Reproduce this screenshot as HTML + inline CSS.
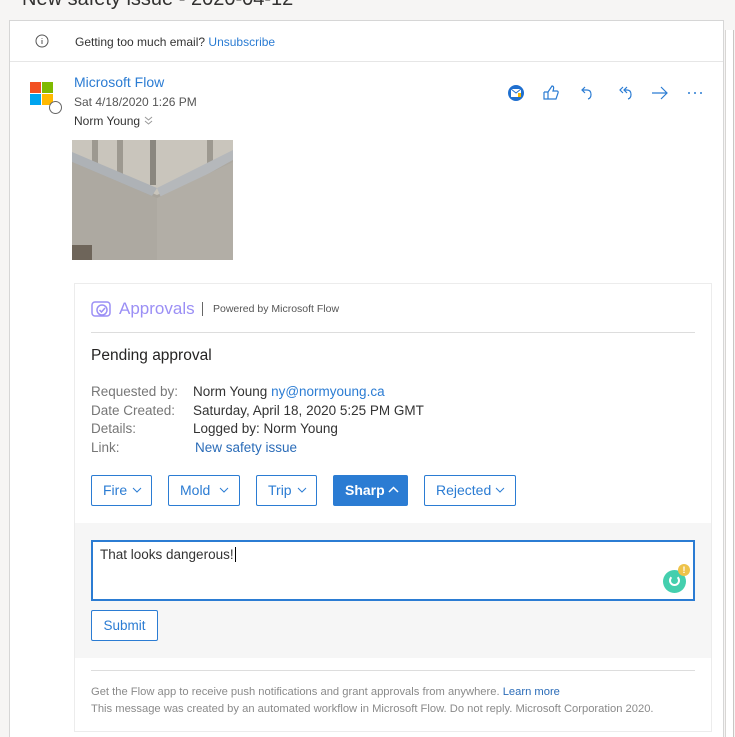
<!DOCTYPE html>
<html><head><meta charset="utf-8"><style>
*{box-sizing:border-box;margin:0;padding:0}
html,body{width:735px;height:737px;overflow:hidden}
body{background:#f6f5f4;font-family:"Liberation Sans",sans-serif;position:relative;color:#252423}
.a{position:absolute}
.card{left:9px;top:20px;width:715px;height:717px;background:#fff;border:1px solid #d6d6d6;border-bottom:none}
.sb{left:725px;top:30px;width:9px;height:707px;background:#fff;border-left:1px solid #d8d6d4;border-right:1px solid #c8c6c4}
.blue{color:#2b7cd3}
.btn{position:absolute;top:475px;height:31px;border:1px solid #2b7cd3;border-radius:2px;color:#2b7cd3;font-size:14px;line-height:29px;padding-left:11px;background:#fff}
.btn svg{position:absolute;top:11px}
.lbl{color:#777;font-size:13.5px;left:91px}
.val{font-size:13.5px;left:193px;color:#333}
</style></head><body>
<div class="a" style="left:22px;top:-12px;font-size:20px;color:#323130">New safety issue - 2020-04-12</div>
<div class="a card"></div>
<div class="a sb"></div>
<svg class="a" style="left:35px;top:34px" width="14" height="14" viewBox="0 0 14 14"><circle cx="7" cy="7" r="6" fill="none" stroke="#555" stroke-width="1"/><path d="M7 6v4M7 4v.8" stroke="#555" stroke-width="1"/></svg>
<div class="a" style="left:75px;top:35px;font-size:12px;color:#333">Getting too much email? <span class="blue">Unsubscribe</span></div>
<div class="a" style="left:10px;top:61px;width:713px;height:1px;background:#e6e6e6"></div>
<div class="a" style="left:30px;top:82px;width:11px;height:11px;background:#f25022"></div>
<div class="a" style="left:42px;top:82px;width:11px;height:11px;background:#7fba00"></div>
<div class="a" style="left:30px;top:94px;width:11px;height:11px;background:#00a4ef"></div>
<div class="a" style="left:42px;top:94px;width:11px;height:11px;background:#ffb900"></div>
<div class="a" style="left:49px;top:101px;width:13px;height:13px;border-radius:50%;background:#fff;border:1.3px solid #666"></div>
<div class="a blue" style="left:74px;top:74px;font-size:14px">Microsoft Flow</div>
<div class="a" style="left:74px;top:95px;font-size:12px;color:#555">Sat 4/18/2020 1:26 PM</div>
<div class="a" style="left:74px;top:114px;font-size:12px;color:#333">Norm Young</div>
<svg class="a" style="left:144px;top:116px" width="9" height="9"><path d="M1 1l3.5 3 3.5-3M1 5l3.5 3 3.5-3" stroke="#999" fill="none"/></svg>
<svg class="a" style="left:506px;top:84px" width="200" height="18" viewBox="0 0 200 18">
<circle cx="10" cy="9" r="8" fill="#1f6fcf"/><rect x="5" y="5" width="10" height="8" fill="#fff"/><path d="M5 5l5 4 5-4" stroke="#1f6fcf" fill="none"/><rect x="12" y="9" width="3" height="4" fill="#f5b800"/>
<path d="M38 8h4l4-6c2 0 2 2 1 5h4c1 0 1.5 1 1 2l-2 6h-8v-7M38 8v7h4" stroke="#2b7cd3" fill="none" stroke-width="1.2"/>
<path d="M79 3l-3 3 3 3M76 6h5c3 0 4 2 4 4.5s-1 4-3 4.5" stroke="#2b7cd3" fill="none" stroke-width="1.2"/>
<path d="M117 3l-3 3 3 3M121 3l-3 3 3 3M118 6h3c3 0 4 2 4 4.5s-1 4-3 4.5" stroke="#2b7cd3" fill="none" stroke-width="1.2"/>
<path d="M146 9h15M155 3l6 6-6 6" stroke="#2b7cd3" fill="none" stroke-width="1.2"/>
<circle cx="183" cy="9" r="1" fill="#2b7cd3"/><circle cx="189" cy="9" r="1" fill="#2b7cd3"/><circle cx="195" cy="9" r="1" fill="#2b7cd3"/>
</svg>
<!-- photo -->
<svg class="a" style="left:72px;top:140px" width="161" height="120" viewBox="0 0 161 120">
<rect width="161" height="120" fill="#a8a49c"/>
<polygon points="0,0 161,0 161,20 85,55 0,20" fill="#c9c5bc"/>
<rect x="20" y="0" width="6" height="28" fill="#9d9990"/><rect x="45" y="0" width="6" height="38" fill="#9d9990"/><rect x="78" y="0" width="6" height="45" fill="#8a877f"/><rect x="135" y="0" width="6" height="28" fill="#9d9990"/>
<polygon points="0,12 85,48 80,56 0,22" fill="#aeb2b6"/>
<polygon points="85,48 161,10 161,20 90,60" fill="#b5b8bb"/>
<polygon points="0,22 80,56 90,60 161,20 161,120 0,120" fill="#ada9a1"/>
<polygon points="85,58 161,22 161,120 85,120" fill="#b2aea6"/>
<rect x="0" y="105" width="20" height="15" fill="#6e655a"/>
</svg>
<!-- approval card -->
<div class="a" style="left:74px;top:283px;width:638px;height:449px;border:1px solid #ececec;background:#fff"></div>
<svg class="a" style="left:91px;top:299px" width="22" height="20" viewBox="0 0 22 20"><rect x="1" y="3" width="18" height="14" rx="3" fill="none" stroke="#9b8ff5" stroke-width="1.5"/><circle cx="11" cy="11" r="5" fill="#fff" stroke="#9b8ff5" stroke-width="1.5"/><path d="M8.5 11l2 2 3.5-4" stroke="#9b8ff5" fill="none" stroke-width="1.5"/></svg>
<div class="a" style="left:119px;top:299px;font-size:17px;color:#9b8ff5">Approvals</div>
<div class="a" style="left:202px;top:302px;width:1px;height:14px;background:#666"></div>
<div class="a" style="left:213px;top:303px;font-size:10.5px;color:#555">Powered by Microsoft Flow</div>
<div class="a" style="left:91px;top:332px;width:604px;height:1px;background:#ddd"></div>
<div class="a" style="left:91px;top:347px;font-size:15.5px;color:#252423">Pending approval</div>
<div class="a lbl" style="top:384px">Requested by:</div>
<div class="a lbl" style="top:403px">Date Created:</div>
<div class="a lbl" style="top:421px">Details:</div>
<div class="a lbl" style="top:440px">Link:</div>
<div class="a val" style="top:384px">Norm Young <span class="blue">ny@normyoung.ca</span></div>
<div class="a val" style="top:403px">Saturday, April 18, 2020 5:25 PM GMT</div>
<div class="a val" style="top:421px">Logged by: Norm Young</div>
<div class="a val blue" style="top:440px;left:195px;color:#2b6cb8">New safety issue</div>
<div class="btn" style="left:91px;width:61px">Fire<svg style="left:40px" width="10" height="6"><path d="M1 1l4 4 4-4" stroke="#2b7cd3" fill="none"/></svg></div>
<div class="btn" style="left:168px;width:72px">Mold<svg style="left:50px" width="10" height="6"><path d="M1 1l4 4 4-4" stroke="#2b7cd3" fill="none"/></svg></div>
<div class="btn" style="left:256px;width:61px">Trip<svg style="left:40px" width="10" height="6"><path d="M1 1l4 4 4-4" stroke="#2b7cd3" fill="none"/></svg></div>
<div class="btn" style="left:333px;width:75px;background:#2b7cd3;color:#fff;font-weight:bold">Sharp<svg style="left:54px;top:10px" width="11" height="7"><path d="M1 6l4.5-4.5 4.5 4.5" stroke="#fff" stroke-width="1.5" fill="none"/></svg></div>
<div class="btn" style="left:424px;width:92px">Rejected<svg style="left:70px" width="10" height="6"><path d="M1 1l4 4 4-4" stroke="#2b7cd3" fill="none"/></svg></div>
<div class="a" style="left:75px;top:523px;width:636px;height:135px;background:#f6f6f6"></div>
<div class="a" style="left:91px;top:540px;width:604px;height:61px;background:#fff;border:2px solid #2b7cd3"></div>
<div class="a" style="left:100px;top:547px;font-size:13.5px;color:#333">That looks dangerous!<span style="border-left:1px solid #000;margin-left:1px"></span></div>
<div class="a" style="left:663px;top:570px;width:23px;height:23px;border-radius:50%;background:#15c39a;opacity:.8"></div>
<div class="a" style="left:669px;top:575px;width:11px;height:11px;border-radius:50%;border:2px solid #fff;border-top-color:transparent"></div>
<div class="a" style="left:678px;top:564px;width:12px;height:12px;border-radius:50%;background:#eec34a;color:#fff;font-size:9px;text-align:center;line-height:12px;font-weight:bold">!</div>
<div class="a" style="left:91px;top:610px;width:67px;height:31px;border:1px solid #2b7cd3;border-radius:2px;background:#fff;color:#2b7cd3;font-size:13.5px;text-align:center;line-height:29px">Submit</div>
<div class="a" style="left:91px;top:670px;width:604px;height:1px;background:#ddd"></div>
<div class="a" style="left:91px;top:684px;font-size:11.2px;color:#8a8a8a;line-height:17px;white-space:nowrap">Get the Flow app to receive push notifications and grant approvals from anywhere. <span style="color:#2b6cb8">Learn more</span><br>This message was created by an automated workflow in Microsoft Flow. Do not reply. Microsoft Corporation 2020.</div>
</body></html>
